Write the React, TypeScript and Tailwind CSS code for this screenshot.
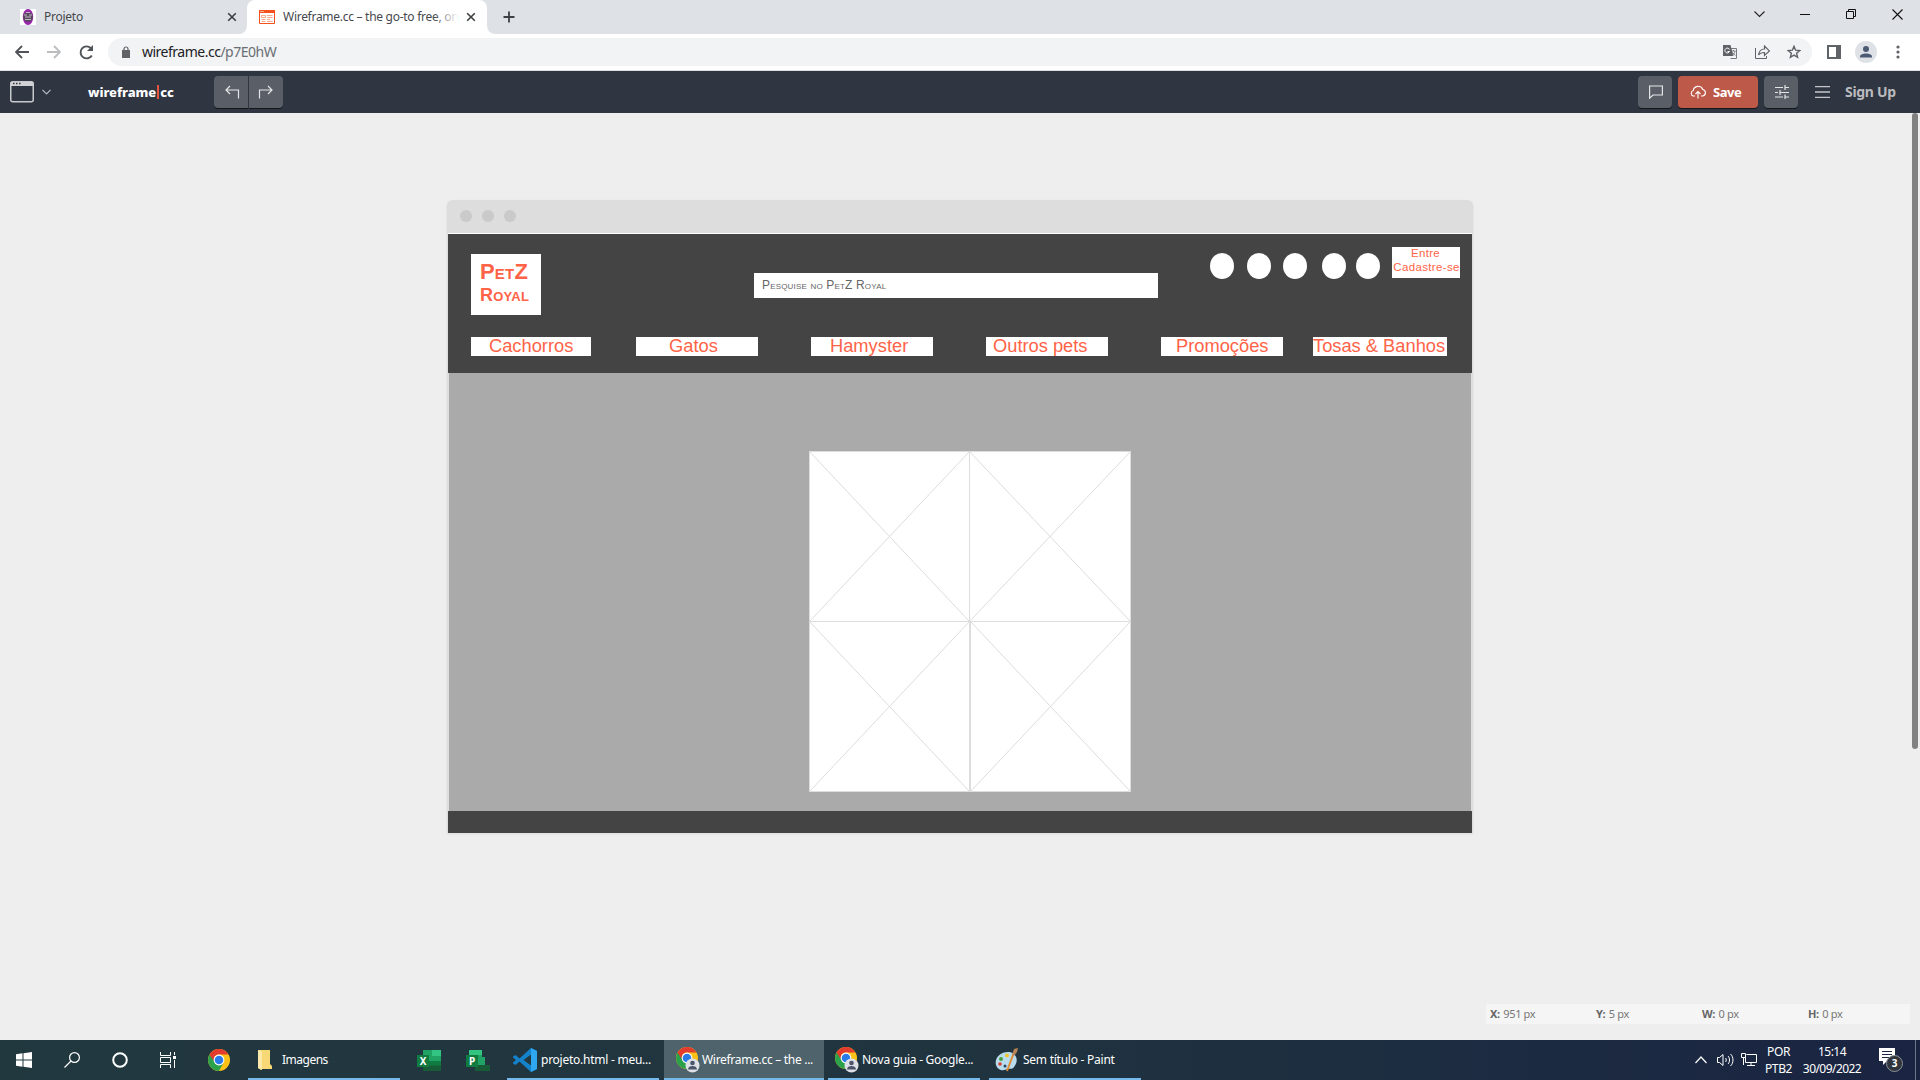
import React from "react";

type P = { w: number; h: number; children: React.ReactNode; cls?: string; box?: string };
const Ico = ({ w, h, children, cls = "", box }: P) => (
  <svg width={w} height={h} viewBox={box || `0 0 ${w} ${h}`} fill="none" className={`block shrink-0 ${cls}`}>
    {children}
  </svg>
);

const Cross = () => (
  <Ico w={10} h={10}><path d="M1.2 1.2 8.8 8.8M8.8 1.2 1.2 8.8" stroke="#3c4043" strokeWidth="1.6" /></Ico>
);

const Chrome = ({ user = false, size = 22 }: { user?: boolean; size?: number }) => (
  <Ico w={user ? 24 : size} h={user ? 26 : size} box={user ? "0 0 24 26" : "0 0 22 22"}>
    <circle cx="11" cy="11" r="11" fill="#fbc116" />
    <path d="M1.5 5.5A11 11 0 0 0 11 22L15.5 13.6 11 11Z" fill="#2aa14a" />
    <path d="M1.5 5.5A11 11 0 0 1 20.5 5.5H11A5.5 5.5 0 0 0 5.8 9.3L5.6 12Z" fill="#e33b2e" />
    <circle cx="11" cy="11" r="5.4" fill="#fff" />
    <circle cx="11" cy="11" r="4.3" fill="#2a7be8" />
    {user && (
      <>
        <circle cx="16.5" cy="18.5" r="7" fill="#dde0e6" />
        <circle cx="16.5" cy="16" r="2.3" fill="#4b5468" />
        <path d="M12 22.5c0-4.6 9-4.6 9 0Z" fill="#4b5468" />
      </>
    )}
  </Ico>
);

const Office = ({ letter }: { letter: string }) => (
  <div className="relative h-[21px] w-6">
    <Ico w={24} h={21}>
      {letter === "X" ? (
        <>
          <path d="M6 0h18v21H6Z" fill="#21a366" />
          <path d="M15 0h9v6h-9Z" fill="#33c481" />
          <path d="M6 11h18v5H6Z" fill="#107c41" />
          <path d="M6 15.5h18V21H6Z" fill="#185c37" />
        </>
      ) : (
        <>
          <path d="M3 0h13v7h3v8h5v6H9V15H3Z" fill="#21a366" />
          <path d="M3 0h13v5H3Z" fill="#33c481" />
          <path d="M9 15h15v6H9Z" fill="#185c37" />
        </>
      )}
      <path d="M0 5h12v12H0Z" fill="#107c41" />
    </Ico>
    <span className="absolute left-0 top-[5px] w-3 text-center text-[10px] font-bold leading-3 text-white">{letter}</span>
  </div>
);

const nav = [
  { t: "Cachorros", c: "ml-[23px] w-[120px] pl-[18px]" },
  { t: "Gatos", c: "ml-[45px] w-[122px] pl-[33px]" },
  { t: "Hamyster", c: "ml-[53px] w-[122px] pl-[19px]" },
  { t: "Outros pets", c: "ml-[53px] w-[122px] pl-[7px]" },
  { t: "Promoções", c: "ml-[53px] w-[122px] pl-[15px]" },
  { t: "Tosas & Banhos", c: "ml-[30px] w-[134px]" },
];

const Placeholder = ({ w }: { w: number }) => (
  <Ico w={w} h={171}>
    <rect x="0.5" y="0.5" width={w - 1} height="170" fill="#fff" stroke="#ddd" />
    <path d={`M.5 .5 ${w - 0.5} 170.5M${w - 0.5} .5 .5 170.5`} stroke="#dcdcdc" />
  </Ico>
);

const Task = ({ cls, icon, label, txt }: { cls: string; icon: React.ReactNode; label: string; txt: string }) => (
  <div className={`flex h-10 shrink-0 items-center border-b-2 border-[#76b9ed] pt-[2px] ${cls}`}>
    {icon}
    <span className={`whitespace-nowrap text-[12px] text-white ${txt}`}>{label}</span>
  </div>
);

function ChromeBar() {
  return (
    <>
      <div className="flex h-[34px] items-start bg-[#dee1e6] text-[12px] text-[#45494d]">
        <div className="flex h-[34px] w-[247px] shrink-0 items-center pl-5">
          <Ico w={16} h={16}>
            <path d="M0 0h16v16H0Z" fill="#fff" />
            <ellipse cx="8" cy="8" rx="5.2" ry="8" fill="#9a25ad" />
            <ellipse cx="8" cy="8" rx="4.8" ry="5" fill="#574a5e" />
            <path d="M4 6h3M9 6h3M5 10.5h6M6 3.5h4M5 8h6" stroke="#c3b7c8" />
          </Ico>
          <span className="ml-2 w-[183px] tracking-[-0.25px]">Projeto</span>
          <Cross />
        </div>
        <div className="relative flex h-[34px] w-60 shrink-0 items-center rounded-t-lg bg-white pl-3">
          <div className="absolute -left-2 bottom-0 h-2 w-2 bg-white"><div className="h-2 w-2 rounded-br-lg bg-[#dee1e6]" /></div>
          <div className="absolute -right-2 bottom-0 h-2 w-2 bg-white"><div className="h-2 w-2 rounded-bl-lg bg-[#dee1e6]" /></div>
          <Ico w={16} h={14}>
            <path d="M.5 .5h15v13H.5Z" stroke="#f4511e" fill="#fff" />
            <path d="M0 0h16v3H0Z" fill="#f4511e" />
            <path d="M1.500 1.5h1M3.500 1.5h1" stroke="#fff" />
            <path d="M2.5 5.5h4v2h-4ZM8 5.5h5.5M8 7.5h5.5M2.5 9.5h4M2.5 11.5h4M8 9.5h3M8 11.5h5.5" stroke="#f9a98c" />
          </Ico>
          <div className="relative ml-2 w-[175px] whitespace-nowrap tracking-[-0.28px]">
            Wireframe.cc – the go-to free, on
            <div className="absolute inset-y-0 right-0 w-6 bg-gradient-to-r from-transparent to-white" />
          </div>
          <div className="ml-[8px]"><Cross /></div>
        </div>
        <div className="ml-4 mt-[11px]"><Ico w={12} h={12}><path d="M6 .5v11M.5 6h11" stroke="#3c4043" strokeWidth="1.8" /></Ico></div>
        <div className="ml-auto mr-[17px] mt-[8px] flex items-center">
          <Ico w={11} h={12} cls="mr-[35px]"><path d="m.5 3.5 5 5 5-5" stroke="#222" strokeWidth="1.100" /></Ico>
          <Ico w={10} h={12} cls="mr-9"><path d="M0 6.5h10" stroke="#111" /></Ico>
          <Ico w={10} h={10} cls="mr-9"><path d="M.5 2.5h7v7h-7ZM2.5 2.5v-2h7v7h-2" stroke="#111" /></Ico>
          <Ico w={11} h={11}><path d="m.5 .5 10 10M10.500 .5l-10 10" stroke="#111" strokeWidth="1.100" /></Ico>
        </div>
      </div>
      <div className="flex h-[37px] items-center border-b border-[#dcdfe3] bg-white">
        <Ico w={14} h={14} cls="ml-[15px]"><path d="M14 7H1.500M7 1 1 7l6 6" stroke="#505357" strokeWidth="1.8" /></Ico>
        <Ico w={14} h={14} cls="ml-[18px]"><path d="M0 7h12.500M7 1l6 6-6 6" stroke="#bbbdbf" strokeWidth="1.8" /></Ico>
        <Ico w={15} h={15} cls="ml-[18px]"><path d="M12.800 10.400A6 6 0 1 1 12 3.300" stroke="#505357" strokeWidth="1.9" /><path d="M14 0v6H8Z" fill="#505357" /></Ico>
        <div className="ml-[14px] flex h-7 w-[1704px] items-center rounded-full bg-[#f1f3f4] pl-[14px] pr-[11px] text-[14px] leading-none text-[#202124]">
          <Ico w={8} h={12}><path d="M0 4h8v8H0Z" fill="#5f6368" /><path d="M2 5V3a2 2 0 0 1 4 0v2" stroke="#5f6368" strokeWidth="1.2" /></Ico>
          <span className="ml-[12px] tracking-[-0.5px]">wireframe.cc<span className="text-[#6a6e73]">/p7E0hW</span></span>
          <Ico w={14} h={14} cls="ml-auto">
            <path d="M5 3.500h8.500v10H7.500" stroke="#777a7e" /><path d="M0 0h7.500l3 11H0Z" fill="#5f6368" />
            <path d="M6.500 4.500A2.400 2.400 0 1 0 6.500 6.500H4.500" stroke="#fff" /><path d="M8.500 6h4M10.500 5v1M12 6c0 2-1.500 3.500-2.500 4M9.500 7.500l3 3" stroke="#777a7e" strokeWidth=".9" />
          </Ico>
          <Ico w={15} h={14} cls="ml-[18px]"><path d="M.5 3v10.500h11V11" stroke="#5f6368" /><path d="M9.500 1v3C6 4 4 6.500 3.500 10 5 8 7 7.500 9.500 7.500v3L14.500 6Z" stroke="#5f6368" strokeWidth="1.2" /></Ico>
          <Ico w={14} h={14} cls="ml-[17px]"><path d="m7 1.300 1.600 3.900 4.200.3-3.200 2.700 1 4.100L7 10.100l-3.600 2.200 1-4.100L1.200 5.500l4.200-.3Z" stroke="#5f6368" strokeWidth="1.400" /></Ico>
        </div>
        <Ico w={14} h={14} cls="ml-[15px]"><path d="M1 1h12v12H1Z" stroke="#5f6368" strokeWidth="2" /><path d="M9 0h5v14H9Z" fill="#5f6368" /></Ico>
        <Ico w={22} h={22} cls="ml-[14px]"><circle cx="11" cy="11" r="11" fill="#dee1e6" /><circle cx="11" cy="8" r="3" fill="#4c5a74" /><path d="M5 16.500v-1c0-4 12-4 12 0v1Z" fill="#4c5a74" /></Ico>
        <Ico w={4} h={14} cls="ml-[19px]"><circle cx="2" cy="2" r="1.600" fill="#5f6368" /><circle cx="2" cy="7" r="1.600" fill="#5f6368" /><circle cx="2" cy="12" r="1.600" fill="#5f6368" /></Ico>
      </div>
    </>
  );
}

function AppBar() {
  return (
    <div className="flex h-[42px] items-center bg-[#2f3541]">
      <Ico w={24} h={22} cls="ml-[10px]"><rect x=".75" y=".75" width="22.500" height="20" rx="2" stroke="#c8c9cc" strokeWidth="1.500" /><path d="M1 1h22v4H1Z" fill="#d0d1d3" /><path d="M3 2.500h1.500M6 2.500h1.500M9 2.500h1.500" stroke="#2f3541" strokeWidth="1.500" /></Ico>
      <Ico w={9} h={6} cls="ml-[7.500px]"><path d="m.5 .8 4 4 4-4" stroke="#b9bbc0" strokeWidth="1.200" /></Ico>
      <div className="ml-[37.500px] flex w-[126px] items-center text-[13px] font-extrabold leading-none tracking-[-0.04px] text-white">
        <span>wireframe</span><i className="mx-px h-[14px] w-[2px] bg-[#e4553f]" /><span>cc</span>
      </div>
      <div className="flex h-8 w-[69px] gap-px">
        <div className="flex w-[34px] items-center justify-center rounded-l bg-[#5a5e67] pl-[2px] shadow-[0_1px_0_#14161b]">
          <Ico w={15} h={14}><path d="M5 1 1 5l4 4M1 5h12.500v8.500" stroke="#e4e5e7" strokeWidth="1.200" /></Ico>
        </div>
        <div className="flex w-[34px] items-center justify-center rounded-r bg-[#5a5e67] pr-[2px] shadow-[0_1px_0_#14161b]">
          <Ico w={15} h={14}><path d="m10 1 4 4-4 4M14 5H1.500v8.500" stroke="#e4e5e7" strokeWidth="1.200" /></Ico>
        </div>
      </div>
      <div className="ml-auto flex h-8 w-[34px] items-center justify-center rounded bg-[#5a5e67] pl-px shadow-[0_1px_0_#14161b]">
        <Ico w={14} h={14}><path d="M.6 1h12.800v9H4L.6 13.200Z" stroke="#e4e5e7" strokeWidth="1.200" /></Ico>
      </div>
      <div className="ml-[6px] flex h-8 w-20 items-center rounded bg-[#bd5948] pl-3 text-[13px] font-bold tracking-[-0.45px] text-white shadow-[0_1px_0_#14161b]">
        <Ico w={16} h={14} cls="mr-[7px]"><path d="M5 11H3.500a2.800 2.800 0 0 1-.3-5.400A5 5 0 0 1 12.800 4.500 3.300 3.300 0 0 1 12.500 11H11M8 13.500V6.500M5.500 9 8 6.500 10.500 9" stroke="#fff" strokeWidth="1.100" /></Ico>
        <span className="mt-px">Save</span>
      </div>
      <div className="ml-[6px] flex h-8 w-[34px] items-center justify-center rounded bg-[#5a5e67] pl-px shadow-[0_1px_0_#14161b]">
        <Ico w={14} h={14}><path d="M0 2.500h8M10 2.500h4M10 0v5M0 7.500h3M5 7.500h9M5 5v5M0 12h8M10 12h4M10 9.500V14" stroke="#e4e5e7" strokeWidth="1.200" /></Ico>
      </div>
      <Ico w={15} h={12} cls="ml-[17px]"><path d="M0 .7h15M0 6h15M0 11.300h15" stroke="#c5c6ca" strokeWidth="1.300" /></Ico>
      <span className="ml-[15px] mr-[22px] w-[53px] whitespace-nowrap text-[14px] font-bold leading-none tracking-[-0.3px] text-[#b9bbbf]">Sign Up</span>
    </div>
  );
}

function Mock() {
  return (
    <div className="mx-auto mt-[87px] w-[1026px] rounded-t-md border-x border-[#ddd] bg-[#ddd] shadow-[0_1px_3px_rgba(0,0,0,0.08)] font-['Liberation_Sans',sans-serif]">
      <div className="flex h-[33px] items-center gap-[10px] pb-px pl-3">
        <i className="h-3 w-3 rounded-full bg-[#cacaca]" /><i className="h-3 w-3 rounded-full bg-[#cacaca]" /><i className="h-3 w-3 rounded-full bg-[#cacaca]" />
      </div>
      <div className="h-[140px] border-t border-white bg-[#444] text-[#ff6347]">
        <div className="flex h-[103px] items-start">
          <div className="ml-[23px] mt-5 h-[61px] w-[70px] bg-white pl-[9px] pt-[6px] font-bold [font-variant:small-caps]">
            <div className="text-[22px] leading-6 tracking-[0.2px]">PetZ</div>
            <div className="text-[18px] leading-[22px] tracking-[0.25px]">Royal</div>
          </div>
          <div className="ml-[213px] mt-[39px] h-[25px] w-[404px] bg-white pl-2 text-[12px] leading-[24px] tracking-[0.17px] text-[#666] [font-variant:small-caps]">Pesquise no PetZ Royal</div>
          <div className="ml-[52px] mt-[19px] flex">
            <i className="h-[26px] w-6 rounded-[50%] bg-white" />
            <i className="ml-[13px] h-[26px] w-6 rounded-[50%] bg-white" />
            <i className="ml-3 h-[26px] w-6 rounded-[50%] bg-white" />
            <i className="ml-[15px] h-[26px] w-6 rounded-[50%] bg-white" />
            <i className="ml-[10px] h-[26px] w-6 rounded-[50%] bg-white" />
          </div>
          <div className="ml-3 mt-[13px] h-[31px] w-[68px] whitespace-nowrap bg-white text-center text-[11.5px] leading-[14px] tracking-[0.35px]">
            <div className="-mt-px pr-px">Entre</div><div className="pl-px">Cadastre-se</div>
          </div>
        </div>
        <div className="flex h-[19px]">
          {nav.map((n) => (
            <div key={n.t} className={`h-[19px] shrink-0 whitespace-nowrap bg-white text-[18.3px] leading-[18px] ${n.c}`}>{n.t}</div>
          ))}
        </div>
      </div>
      <div className="mx-px h-[438px] bg-[#aaa] pl-[360px] pt-[78px]">
        <div className="flex"><Placeholder w={161} /><div className="-ml-px"><Placeholder w={162} /></div></div>
        <div className="-mt-px flex"><Placeholder w={161} /><Placeholder w={161} /></div>
      </div>
      <div className="h-[22px] bg-[#444]" />
    </div>
  );
}

function Taskbar() {
  return (
    <div className="flex h-10 items-center bg-gradient-to-r from-[#22383f] via-[#20343f] to-[#1a2442] text-[12px] text-white">
      <Ico w={16} h={16} cls="ml-4"><path d="M0 2.300 6.500 1.300V7.500H0ZM7.500 1.200 16 0v7.500H7.500ZM0 8.500h6.500v6.200L0 13.800ZM7.500 8.500H16V16l-8.500-1.200Z" fill="#fff" /></Ico>
      <Ico w={16} h={16} cls="ml-8"><circle cx="10.500" cy="5.500" r="4.900" stroke="#fff" strokeWidth="1.200" /><path d="m7 9-6.500 6.500" stroke="#fff" strokeWidth="1.200" /></Ico>
      <Ico w={16} h={16} cls="ml-8"><circle cx="8" cy="8" r="6.800" stroke="#fff" strokeWidth="2" /></Ico>
      <Ico w={16} h={16} cls="ml-8"><path d="M.5 0v3.500h10V0M.5 5.500h10v5H.5ZM.5 16v-3.500h10V16M14.500 0v3M14.500 8v8" stroke="#fff" /><path d="M13 4h3v3h-3Z" fill="#fff" /></Ico>
      <div className="ml-8"><Chrome /></div>
      <Task cls="ml-[18px] w-[152px] pl-[10px]" label="Imagens" txt="ml-[10px] tracking-[-0.5px]" icon={<Ico w={14} h={20}><path d="M0 0h12v14l2 2v3H4l-1 1-3-2Z" fill="#f8d775" /><path d="M0 0 4 1.500V20L0 18Z" fill="#fce9a9" /></Ico>} />
      <div className="ml-[17px]"><Office letter="X" /></div>
      <div className="ml-[25px]"><Office letter="P" /></div>
      <Task cls="ml-[17px] w-[152px] pl-[6px]" label="projeto.html - meu..." txt="ml-1 tracking-[-0.25px]" icon={<Ico w={24} h={24}><path d="M18 0 24 3v18l-6 3L6.500 13.500 2.500 17 0 15.500v-1L3 12 0 9.500v-1L2.500 7 6.500 10.500Z" fill="#1583cc" /><path d="M18 6.500v11L10.500 12Z" fill="#22383f" /><path d="m18 0 6 3v18l-6 3Z" fill="#2ea6f0" /></Ico>} />
      <Task cls="ml-[5px] w-40 bg-[#4e636b] pl-3" label="Wireframe.cc – the ..." txt="ml-[2px] tracking-[-0.3px]" icon={<Chrome user />} />
      <Task cls="ml-1 w-[152px] pl-[7px]" label="Nova guia - Google..." txt="ml-[3px] tracking-[-0.27px]" icon={<Chrome user />} />
      <Task cls="ml-[9px] w-[152px] pl-[6px]" label="Sem título - Paint" txt="ml-[4px] tracking-[-0.25px]" icon={<Ico w={24} h={24}><path d="M1 17C-1 9 7 3 14 4c8 1 10 9 5 15-2 3-5 1-7 2-3 2-9 2-11-4Z" fill="#b9dced" /><circle cx="6" cy="11" r="2" fill="#4a9d3b" /><circle cx="12" cy="7.500" r="2" fill="#f1c432" /><circle cx="5" cy="16" r="1.800" fill="#da3e32" /><circle cx="10" cy="18" r="1.500" fill="#2a4460" /><path d="m12 23 6-16" stroke="#e38b32" strokeWidth="2" /><path d="m17 7 2-6 4-1-1 4-3 4Z" fill="#b98455" /></Ico>} />
      <Ico w={12} h={8} cls="ml-auto"><path d="m.5 7 5.500-6 5.500 6" stroke="#fff" strokeWidth="1.200" /></Ico>
      <Ico w={17} h={14} cls="ml-[10px]"><path d="M.5 4.500h2L6 1.500v11L2.500 9.500h-2ZM8.500 5c1 1 1 3 0 4M11 3c2 2 2 6 0 8M13.500 1c3.300 3 3.300 9 0 12" stroke="#fff" /></Ico>
      <Ico w={16} h={14} cls="ml-[7px]"><path d="M5.500 1.500h10v8h-11v-5M.5 .5h4v4h-4ZM2.500 4.500V12M10 9.500V12M6 12.500h8" stroke="#fff" /></Ico>
      <div className="ml-[8px] mr-px w-[27px] whitespace-nowrap text-center text-[12px] leading-[17px] tracking-[-0.4px]"><div>POR</div><div>PTB2</div></div>
      <div className="ml-[9px] w-[60px] whitespace-nowrap text-center text-[12px] leading-[17px] tracking-[-0.55px]"><div>15:14</div><div>30/09/2022</div></div>
      <div className="relative ml-[17px] h-6 w-6">
        <Ico w={16} h={17}><path d="M0 0h16v13H8l-4 4v-4H0Z" fill="#fff" /><path d="M3 3.500h10M3 6.500h10M3 9.500h7" stroke="#1b2640" /></Ico>
        <span className="absolute left-[7px] top-[7px] h-[17px] w-[17px] rounded-full border border-[#8b929c] bg-[#30343c] text-center text-[10px] font-bold leading-[15px]">3</span>
      </div>
      <i className="ml-[12px] mr-1 h-10 w-px bg-[#6d7586]" />
    </div>
  );
}

export default function App() {
  return (
    <div className="flex h-[1080px] w-[1920px] flex-col overflow-hidden bg-[#eee] font-['Noto_Sans',sans-serif]">
      <ChromeBar />
      <AppBar />
      <div className="relative h-[927px] overflow-hidden">
        <Mock />
        <div className="absolute right-[2px] top-0 h-[636px] w-[6px] rounded-full bg-[#818181]" />
        <div className="absolute bottom-4 right-[10px] grid h-5 w-[424px] grid-cols-4 items-center bg-[#f5f5f5] text-[11px] tracking-[-0.35px] text-[#777]">
          {[["X:", "951 px"], ["Y:", "5 px"], ["W:", "0 px"], ["H:", "0 px"]].map(([a, b]) => (
            <span key={a} className="pl-1"><b className="mr-px text-[#666]">{a}</b> {b}</span>
          ))}
        </div>
      </div>
      <Taskbar />
    </div>
  );
}
